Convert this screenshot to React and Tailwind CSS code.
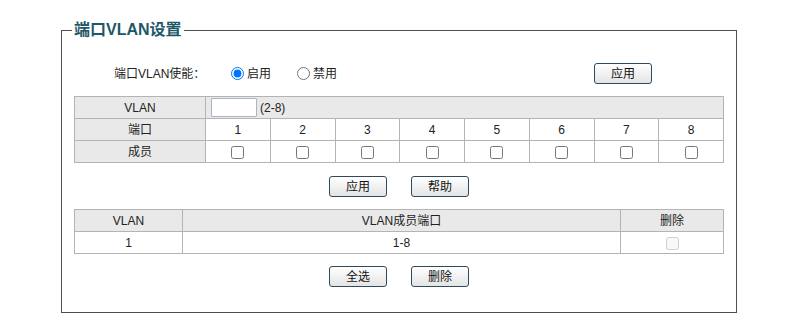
import React from "react";

const font = { fontFamily: '"Liberation Sans", "Noto Sans CJK SC", sans-serif' };

function Btn({ children }) {
  return (
    <button className="w-[58px] h-[21px] rounded-[3px] border border-[#2f4a5c] bg-gradient-to-b from-white to-[#e4e4e4] text-[12px] leading-none text-[#111]">
      {children}
    </button>
  );
}

export default function App() {
  const ports = [1, 2, 3, 4, 5, 6, 7, 8];
  const cell = "border border-[#b4b4b4] text-center p-0 h-[22px] font-normal";
  return (
    <div className="w-[789px] h-[332px] bg-white text-[12px] text-[#222]" style={font}>
      <div className="pt-[19px] pl-[61px]">
        <fieldset className="w-[676px] border border-[#505050] px-[12px] pb-[25px]">
          <legend className="ml-[-2px] px-[2px] text-[16px] leading-[22px] font-bold text-[#1d5867]">
            端口VLAN设置
          </legend>
          <div className="mt-[22px] h-[21px] flex items-center">
            <span className="ml-[40px] w-[117px]">端口VLAN使能：</span>
            <label className="flex items-center">
              <input type="radio" name="en" defaultChecked className="w-[13px] h-[13px]" />
              <span className="ml-[3px]">启用</span>
            </label>
            <label className="flex items-center ml-[26px]">
              <input type="radio" name="en" className="w-[13px] h-[13px]" />
              <span className="ml-[3px]">禁用</span>
            </label>
            <div className="ml-[257px]">
              <Btn>应用</Btn>
            </div>
          </div>
          <table className="mt-[12px] w-full table-fixed border-collapse">
            <colgroup>
              <col className="w-[131px]" />
              {ports.map((p) => (
                <col key={p} />
              ))}
            </colgroup>
            <tbody>
              <tr className="bg-[#e9e9e9]">
                <td className={cell}>VLAN</td>
                <td colSpan={8} className="border border-[#b4b4b4] p-0 h-[22px]">
                  <div className="flex items-center pl-[5px]">
                    <input type="text" className="w-[46px] h-[19px] border border-[#a7b6c6] bg-white rounded-[1px]" />
                    <span className="ml-[3px]">(2-8)</span>
                  </div>
                </td>
              </tr>
              <tr>
                <td className={cell + " bg-[#e9e9e9]"}>端口</td>
                {ports.map((p) => (
                  <td key={p} className={cell}>{p}</td>
                ))}
              </tr>
              <tr>
                <td className={cell + " bg-[#e9e9e9]"}>成员</td>
                {ports.map((p) => (
                  <td key={p} className={cell}>
                    <input type="checkbox" className="w-[13px] h-[13px] align-middle" />
                  </td>
                ))}
              </tr>
            </tbody>
          </table>
          <div className="mt-[13px] flex justify-center gap-[24px]">
            <Btn>应用</Btn>
            <Btn>帮助</Btn>
          </div>
          <table className="mt-[12px] w-full table-fixed border-collapse">
            <colgroup>
              <col className="w-[108px]" />
              <col />
              <col className="w-[103px]" />
            </colgroup>
            <tbody>
              <tr className="bg-[#e9e9e9]">
                <td className={cell}>VLAN</td>
                <td className={cell}>VLAN成员端口</td>
                <td className={cell}>删除</td>
              </tr>
              <tr>
                <td className={cell}>1</td>
                <td className={cell}>1-8</td>
                <td className={cell}>
                  <input type="checkbox" disabled className="w-[13px] h-[13px] align-middle" />
                </td>
              </tr>
            </tbody>
          </table>
          <div className="mt-[12px] flex justify-center gap-[24px]">
            <Btn>全选</Btn>
            <Btn>删除</Btn>
          </div>
        </fieldset>
      </div>
    </div>
  );
}
